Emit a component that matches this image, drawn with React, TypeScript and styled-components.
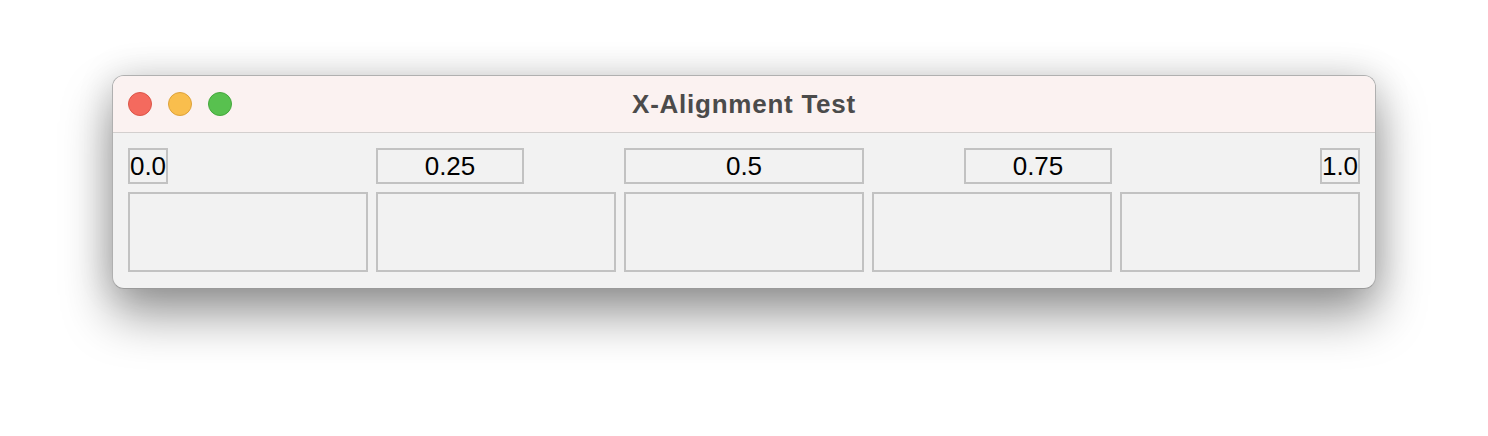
import React from "react";
import styled, { createGlobalStyle } from "styled-components";

const Global = createGlobalStyle`
  html, body { margin: 0; padding: 0; background: #ffffff; }
  body { font-family: "Liberation Sans", Arial, sans-serif; }
`;

const Page = styled.div`
  padding: 75px 112px 148px 112px;
  width: 1264px;
`;

const Window = styled.div`
  width: 1264px;
  height: 214px;
  box-sizing: border-box;
  border-radius: 12px;
  border: 1px solid #b0b0b0;
  border-bottom-color: #9a9a9a;
  background: #f2f2f2;
  overflow: hidden;
  box-shadow: 0 26px 50px rgba(0, 0, 0, 0.4), 0 0 36px rgba(0, 0, 0, 0.14);
  display: flex;
  flex-direction: column;
`;

const TitleBar = styled.div`
  height: 56px;
  flex: none;
  background: #fbf2f1;
  border-bottom: 1px solid #d3cfce;
  display: grid;
  grid-template-columns: 120px 1fr 120px;
  align-items: center;
`;

const Lights = styled.div`
  display: flex;
  gap: 16px;
  padding-left: 15px;
`;

const Light = styled.span<{ $fill: string; $edge: string }>`
  width: 24px;
  height: 24px;
  border-radius: 50%;
  box-sizing: border-box;
  background: ${(p) => p.$fill};
  border: 1px solid ${(p) => p.$edge};
`;

const Title = styled.div`
  text-align: center;
  font-family: "Liberation Sans", Arial, sans-serif;
  font-weight: 700;
  font-size: 26px;
  color: #4b4b4b;
  letter-spacing: 0.75px;
`;

const Content = styled.div`
  padding: 15px 15px 16px 15px;
  display: flex;
  flex-direction: column;
  gap: 8px;
`;

const Row = styled.div`
  display: grid;
  grid-template-columns: repeat(5, 240px);
  gap: 8px;
`;

const Cell = styled.div<{ $justify: string }>`
  display: flex;
  justify-content: ${(p) => p.$justify};
`;

const Label = styled.div<{ $w: number }>`
  width: ${(p) => p.$w}px;
  height: 36px;
  box-sizing: border-box;
  border: 2px solid #c2c2c2;
  display: flex;
  align-items: center;
  justify-content: center;
  font-family: "Liberation Sans", Arial, sans-serif;
  font-size: 26px;
  color: #000000;
  white-space: nowrap;
`;

const Box = styled.div`
  height: 80px;
  box-sizing: border-box;
  border: 2px solid #c2c2c2;
`;

const labels = [
  { text: "0.0", w: 40, justify: "flex-start" },
  { text: "0.25", w: 148, justify: "flex-start" },
  { text: "0.5", w: 240, justify: "center" },
  { text: "0.75", w: 148, justify: "flex-end" },
  { text: "1.0", w: 40, justify: "flex-end" },
];

export default function App() {
  return (
    <>
      <Global />
      <Page>
        <Window>
          <TitleBar>
            <Lights>
              <Light $fill="#f46a5e" $edge="#dc5548" />
              <Light $fill="#f9be4d" $edge="#dea23a" />
              <Light $fill="#58c14f" $edge="#44a83c" />
            </Lights>
            <Title>X-Alignment Test</Title>
            <span />
          </TitleBar>
          <Content>
            <Row>
              {labels.map((l) => (
                <Cell key={l.text} $justify={l.justify}>
                  <Label $w={l.w}>{l.text}</Label>
                </Cell>
              ))}
            </Row>
            <Row>
              {labels.map((l) => (
                <Box key={l.text} />
              ))}
            </Row>
          </Content>
        </Window>
      </Page>
    </>
  );
}
